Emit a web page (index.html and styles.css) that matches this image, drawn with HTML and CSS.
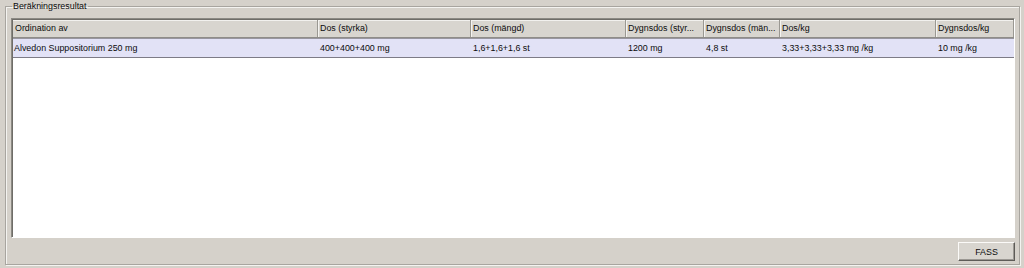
FILE: index.html
```html
<!DOCTYPE html>
<html>
<head>
<meta charset="utf-8">
<link rel="stylesheet" href="styles.css">
</head>
<body>
<fieldset class="group">
  <legend class="legend">Beräkningsresultat</legend>
  <div class="grid">
    <div class="row head">
      <div class="cell c1">Ordination av</div>
      <div class="cell c2">Dos (styrka)</div>
      <div class="cell c3">Dos (mängd)</div>
      <div class="cell c4">Dygnsdos (styr...</div>
      <div class="cell c5">Dygnsdos (män...</div>
      <div class="cell c6">Dos/kg</div>
      <div class="cell c7">Dygnsdos/kg</div>
    </div>
    <div class="row data">
      <div class="cell c1">Alvedon Suppositorium 250 mg</div>
      <div class="cell c2">400+400+400 mg</div>
      <div class="cell c3">1,6+1,6+1,6 st</div>
      <div class="cell c4">1200 mg</div>
      <div class="cell c5">4,8 st</div>
      <div class="cell c6">3,33+3,33+3,33 mg /kg</div>
      <div class="cell c7">10 mg /kg</div>
    </div>
  </div>
  <div class="actions">
    <button class="btn">FASS</button>
  </div>
</fieldset>
</body>
</html>
```

FILE: styles.css
```css
html, body {
  margin: 0;
  padding: 0;
  background: #d5d1ca;
  width: 1024px;
  height: 268px;
  overflow: hidden;
  font-family: "Liberation Sans", Arial, sans-serif;
  font-size: 8.9px;
  color: #0c0c0c;
}
.group {
  margin: 0 0 0 5px;
  width: 1015px;
  min-width: 0;
  padding: 6px 4px 4px 5px;
  border: 1px solid #a8a59f;
  box-shadow: inset 1px 1px 0 #f4f3f0, 1px 1px 0 #f4f3f0;
  height: 265px;
  box-sizing: border-box;
}
.legend {
  padding: 0 1px;
  margin-left: 1px;
  line-height: 12px;
  font-size: 8.9px;
}
.grid {
  height: 220px;
  background: #fff;
  border-left: 1px solid #8c8a84;
  border-top: 1px solid #8c8a84;
  box-shadow: inset 1px 1px 0 #6f6d68;
  border-right: 1px solid #fff;
  border-bottom: 1px solid #fff;
  box-sizing: border-box;
  padding: 1px 0 0 1px;
  overflow: hidden;
}
.row {
  display: grid;
  grid-template-columns: 305px 153px 155px 78px 76px 156px minmax(0, 1fr);
}
.head {
  height: 17px;
  background: #d8d5cf;
  border-bottom: 1px solid #8f8d88;
  box-shadow: inset 0 1px 0 #f2f1ee;
}
.head .cell {
  border-right: 1px solid #9a9892;
  box-shadow: 1px 0 0 #f4f3f0;
  line-height: 17px;
  padding-left: 2px;
}
.data {
  height: 18px;
  background: #e2e2f6;
  border-top: 1px solid #9896a0;
  border-bottom: 1px solid #7d7b86;
}
.data .cell {
  line-height: 18px;
  padding-left: 2px;
}
.data .c1 {
  padding-left: 1px;
}
.cell {
  white-space: nowrap;
  overflow: hidden;
  min-width: 0;
}
.actions {
  display: flex;
  justify-content: flex-end;
}
.btn {
  width: 57px;
  height: 19px;
  padding: 0;
  font-family: "Liberation Sans", Arial, sans-serif;
  font-size: 8.9px;
  color: #0c0c0c;
  background: #d8d5cf;
  border: 1px solid;
  border-color: #fbfaf8 #5d5b57 #5d5b57 #fbfaf8;
  box-shadow: inset -1px -1px 0 #9b9893;
  margin-top: 4px;
}
```
